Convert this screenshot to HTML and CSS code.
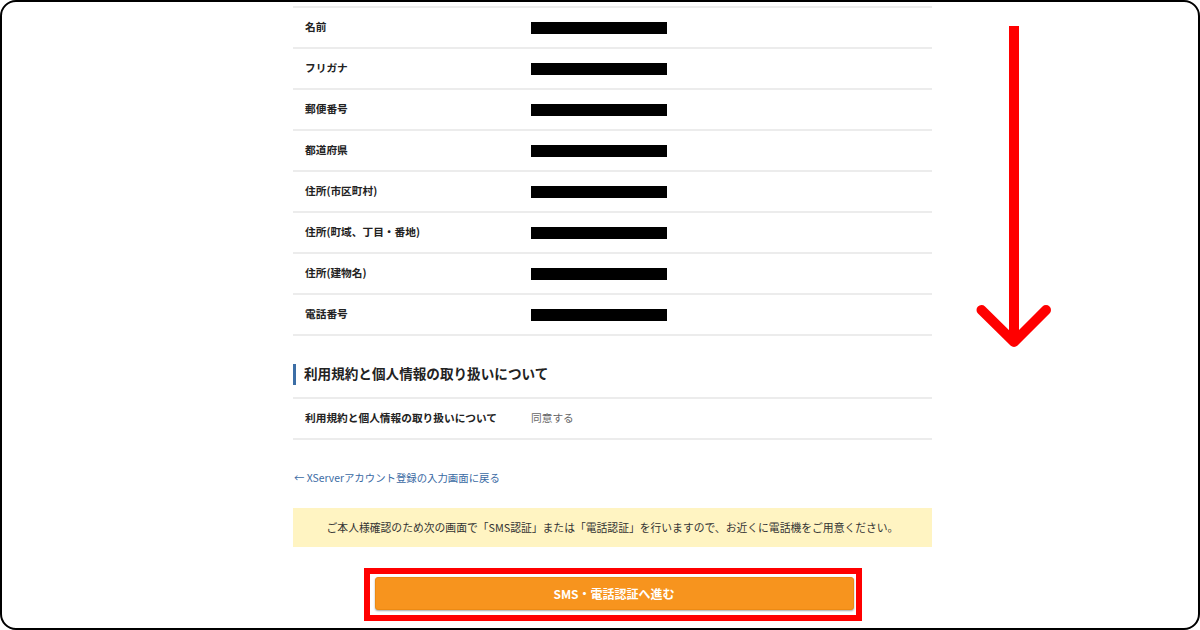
FILE: index.html
```html
<!DOCTYPE html>
<html lang="ja">
<head>
<meta charset="utf-8">
<title>確認画面</title>
<link rel="stylesheet" href="styles.css">
</head>
<body>
<div class="frame">
  <div class="content">
    <div class="table first">
      <div class="row"><div class="label">名前</div><div class="value"><span class="mask"></span></div></div>
      <div class="row"><div class="label">フリガナ</div><div class="value"><span class="mask"></span></div></div>
      <div class="row"><div class="label">郵便番号</div><div class="value"><span class="mask"></span></div></div>
      <div class="row"><div class="label">都道府県</div><div class="value"><span class="mask"></span></div></div>
      <div class="row"><div class="label">住所(市区町村)</div><div class="value"><span class="mask"></span></div></div>
      <div class="row"><div class="label">住所(町域、丁目・番地)</div><div class="value"><span class="mask"></span></div></div>
      <div class="row"><div class="label">住所(建物名)</div><div class="value"><span class="mask"></span></div></div>
      <div class="row"><div class="label">電話番号</div><div class="value"><span class="mask"></span></div></div>
    </div>

    <h2 class="heading">利用規約と個人情報の取り扱いについて</h2>
    <div class="table">
      <div class="row"><div class="label">利用規約と個人情報の取り扱いについて</div><div class="value text">同意する</div></div>
    </div>

    <a class="back" href="#">← XServerアカウント登録の入力画面に戻る</a>

    <div class="notice">ご本人様確認のため次の画面で「SMS認証」または「電話認証」を行いますので、お近くに電話機をご用意ください。</div>

    <div class="highlight">
      <button class="btn" type="button">SMS・電話認証へ進む</button>
    </div>
  </div>

  <svg class="arrow" width="90" height="340" viewBox="0 0 90 340" aria-hidden="true">
    <line x1="44" y1="6" x2="44" y2="318" stroke="#ff0000" stroke-width="10"/>
    <polyline points="11.5,290 44,322 76,290" fill="none" stroke="#ff0000" stroke-width="10" stroke-linecap="round" stroke-linejoin="round"/>
  </svg>
</div>
</body>
</html>
```

FILE: styles.css
```css
html, body {
  margin: 0;
  padding: 0;
  background: #fff;
}
body {
  font-family: "Noto Sans CJK JP", "Noto Sans", "Liberation Sans", sans-serif;
  color: #333;
}
.frame {
  position: relative;
  width: 1200px;
  height: 630px;
  box-sizing: border-box;
  border: 2px solid #000;
  border-radius: 16px;
  overflow: hidden;
  background: #fff;
}
.content {
  width: 639px;
  margin-left: 291px;
  padding-top: 4px;
}
.table {
  border-top: 2px solid #ececec;
}
.row {
  display: flex;
  align-items: center;
  height: 39px;
  border-bottom: 2px solid #ececec;
}
.label {
  width: 226px;
  padding-left: 12px;
  font-size: 10.7px;
  line-height: 14px;
  margin-top: -1px;
  font-weight: bold;
  color: #222;
}
.value {
  font-size: 10.7px;
}
.value.text {
  color: #666;
  line-height: 14px;
  margin-top: -1px;
}
.mask {
  display: block;
  width: 136px;
  height: 12px;
  background: #000;
}
.heading {
  margin: 28px 0 12px 0;
  height: 21px;
  line-height: 19px;
  border-left: 3px solid #3c6ea6;
  padding-left: 8px;
  font-size: 13.6px;
  font-weight: bold;
  color: #222;
}
.back {
  display: block;
  margin-top: 31px;
  margin-left: 1px;
  font-size: 10.4px;
  line-height: 14px;
  color: #3a6aa3;
  text-decoration: none;
}
.notice {
  margin-top: 23px;
  height: 39px;
  line-height: 38px;
  background: #fff4c2;
  text-align: center;
  font-size: 10.8px;
  color: #333;
}
.highlight {
  width: 498px;
  box-sizing: border-box;
  margin: 21px auto 0 auto;
  border: 6px solid #ff0000;
  padding: 3px 2px 5px 5px;
}
.btn {
  display: block;
  width: 479px;
  height: 33px;
  border: 1px solid #ec8a14;
  border-radius: 3px;
  background: #f7941e;
  box-shadow: 0 1px 2px rgba(0,0,0,0.35);
  color: #fff;
  font-family: inherit;
  font-size: 12px;
  font-weight: bold;
  cursor: pointer;
}
.arrow {
  position: absolute;
  left: 968px;
  top: 18px;
}
```
